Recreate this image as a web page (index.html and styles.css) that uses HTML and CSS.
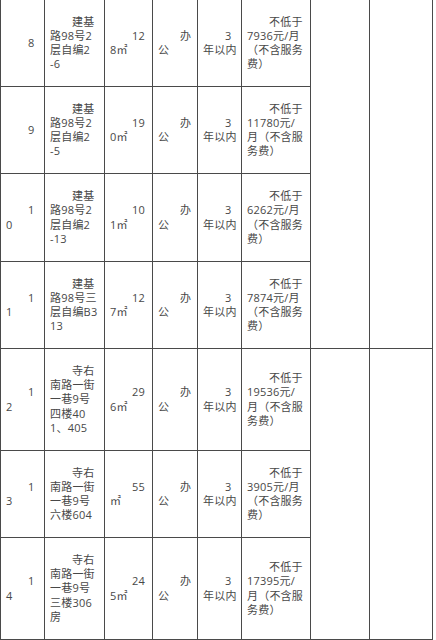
FILE: index.html
```html
<!DOCTYPE html>
<html lang="zh-CN">
<head>
<meta charset="utf-8">
<title>招租表</title>
<link rel="stylesheet" href="styles.css">
</head>
<body>
<div class="sheet">
  <!-- row 8 -->
  <div class="cell"><p>8</p></div>
  <div class="cell"><p>建基<br>路98号2<br>层自编2<br>-6</p></div>
  <div class="cell"><p>12<br>8㎡</p></div>
  <div class="cell"><p>办<br>公</p></div>
  <div class="cell"><p>3<br>年以内</p></div>
  <div class="cell"><p>不低于<br>7936元/月<br>（不含服务<br>费）</p></div>
  <div class="cell merged span4"></div>
  <div class="cell merged span4"></div>
  <!-- row 9 -->
  <div class="cell"><p>9</p></div>
  <div class="cell"><p>建基<br>路98号2<br>层自编2<br>-5</p></div>
  <div class="cell"><p>19<br>0㎡</p></div>
  <div class="cell"><p>办<br>公</p></div>
  <div class="cell"><p>3<br>年以内</p></div>
  <div class="cell"><p>不低于<br>11780元/<br>月（不含服<br>务费）</p></div>
  <!-- row 10 -->
  <div class="cell"><p>1<br>0</p></div>
  <div class="cell"><p>建基<br>路98号2<br>层自编2<br>-13</p></div>
  <div class="cell"><p>10<br>1㎡</p></div>
  <div class="cell"><p>办<br>公</p></div>
  <div class="cell"><p>3<br>年以内</p></div>
  <div class="cell"><p>不低于<br>6262元/月<br>（不含服务<br>费）</p></div>
  <!-- row 11 -->
  <div class="cell"><p>1<br>1</p></div>
  <div class="cell"><p>建基<br>路98号三<br>层自编B3<br>13</p></div>
  <div class="cell"><p>12<br>7㎡</p></div>
  <div class="cell"><p>办<br>公</p></div>
  <div class="cell"><p>3<br>年以内</p></div>
  <div class="cell"><p>不低于<br>7874元/月<br>（不含服务<br>费）</p></div>
  <!-- row 12 -->
  <div class="cell"><p>1<br>2</p></div>
  <div class="cell"><p>寺右<br>南路一街<br>一巷9号<br>四楼40<br>1、405</p></div>
  <div class="cell"><p>29<br>6㎡</p></div>
  <div class="cell"><p>办<br>公</p></div>
  <div class="cell"><p>3<br>年以内</p></div>
  <div class="cell"><p>不低于<br>19536元/<br>月（不含服<br>务费）</p></div>
  <div class="cell merged span3"></div>
  <div class="cell merged span3"></div>
  <!-- row 13 -->
  <div class="cell"><p>1<br>3</p></div>
  <div class="cell"><p>寺右<br>南路一街<br>一巷9号<br>六楼604</p></div>
  <div class="cell"><p>55<br>㎡</p></div>
  <div class="cell"><p>办<br>公</p></div>
  <div class="cell"><p>3<br>年以内</p></div>
  <div class="cell"><p>不低于<br>3905元/月<br>（不含服务<br>费）</p></div>
  <!-- row 14 -->
  <div class="cell"><p>1<br>4</p></div>
  <div class="cell"><p>寺右<br>南路一街<br>一巷9号<br>三楼306<br>房</p></div>
  <div class="cell"><p>24<br>5㎡</p></div>
  <div class="cell"><p>办<br>公</p></div>
  <div class="cell"><p>3<br>年以内</p></div>
  <div class="cell"><p>不低于<br>17395元/<br>月（不含服<br>务费）</p></div>
</div>
</body>
</html>
```
FILE: styles.css
```css
html, body {
  margin: 0;
  padding: 0;
  background: #ffffff;
}

body {
  font-family: "Open Sans", "Noto Sans CJK SC", sans-serif;
  color: #484848;
  overflow: hidden;
}

.sheet {
  display: grid;
  width: max-content;
  grid-template-columns: 43px 59px 47px 44px 43px 68px 58px 62px;
  grid-template-rows: 86px 86px 87px 86px 101px 86px 101px;
  gap: 1px;
  padding: 0 1px 1px 1px;
  background: #4a4a4a;
}

.cell {
  background: #ffffff;
  display: flex;
  align-items: center;
  padding: 0 5px;
  overflow: hidden;
}

.cell p {
  margin: 0;
  font-size: 11px;
  line-height: 14.2px;
  letter-spacing: 0.2px;
  text-indent: 2em;
  white-space: nowrap;
}

.span4 {
  grid-row: span 4;
}

.span3 {
  grid-row: span 3;
}
```
